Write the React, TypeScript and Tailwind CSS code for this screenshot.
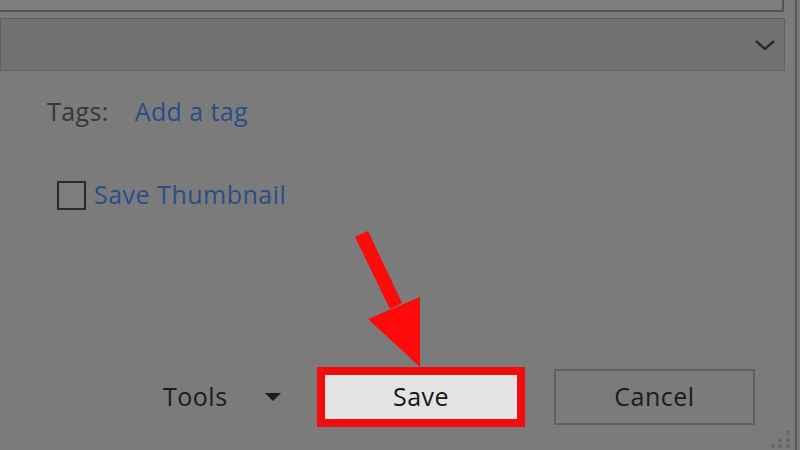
const FONT = { fontFamily: '"Open Sans", "Noto Sans", sans-serif' }

function Chevron() {
  return (
    <svg width="22" height="12" viewBox="0 0 22 12" fill="none">
      <path d="M2 2 L11 10 L20 2" stroke="#2a2a2a" strokeWidth="2.4" />
    </svg>
  )
}

function Arrow() {
  return (
    <svg className="pointer-events-none absolute left-0 top-0" width="800" height="450" viewBox="0 0 800 450">
      <polygon points="355,237 368,231 402,303 390,309" fill="#ff0a0a" />
      <polygon points="368,319 420,297 420,367" fill="#ff0a0a" />
    </svg>
  )
}

function Grip() {
  const dots = [
    [788, 433],
    [780, 440],
    [788, 440],
    [773, 446],
    [780, 446],
    [788, 446],
  ]
  return (
    <svg className="absolute left-0 top-0" width="800" height="450" viewBox="0 0 800 450">
      {dots.map(([x, y]) => (
        <rect key={`${x}-${y}`} x={x - 2} y={y - 2} width="4" height="4" fill="#6a6a6a" />
      ))}
    </svg>
  )
}

export default function App() {
  return (
    <div className="relative h-[450px] w-[800px] overflow-hidden bg-[#7b7b7b] text-[#262626]" style={FONT}>
      <div className="flex h-full w-[797px] flex-col border-r-2 border-[#585858]">
        <div className="h-[12px] w-[784px] border-b-2 border-r-2 border-[#555555] bg-[#7e7e7e]" />

        <div className="mt-[6px] flex h-[53px] w-[785px] items-center justify-end border border-[#5f5f5f] bg-[#717171] pr-[8px]">
          <Chevron />
        </div>

        <div className="ml-[47px] mt-[24px] flex h-[34px] items-center text-[25px] tracking-[0.4px]">
          <span className="text-[#383838]">Tags:</span>
          <span className="ml-[26px] text-[#2a4d87]">Add a tag</span>
        </div>

        <div className="ml-[57px] mt-[50px] flex h-[32px] items-center">
          <div className="h-[29px] w-[29px] border-2 border-[#2a2a2a] bg-[#7d7d7d]" />
          <span className="ml-[8px] text-[25px] tracking-[0.5px] text-[#2a4d87]">Save Thumbnail</span>
        </div>

        <div className="ml-[163px] mt-[156px] flex items-center text-[25px] tracking-[0.5px]">
          <span className="w-[64px] text-[#1c1c1c]">Tools</span>
          <svg className="ml-[38px]" width="16" height="10" viewBox="0 0 16 10">
            <polygon points="0,1 16,1 8,9" fill="#1c1c1c" />
          </svg>
          <div className="ml-[36px] flex h-[60px] w-[208px] items-center justify-center border-[8px] border-[#f20c0c] bg-[#e3e3e3]">
            <span className="text-[#161616]">Save</span>
          </div>
          <div className="ml-[29px] flex h-[56px] w-[201px] items-center justify-center border-2 border-[#606060] bg-[#7b7b7b]">
            <span className="text-[#1c1c1c]">Cancel</span>
          </div>
        </div>
      </div>
      <Grip />
      <Arrow />
    </div>
  )
}
